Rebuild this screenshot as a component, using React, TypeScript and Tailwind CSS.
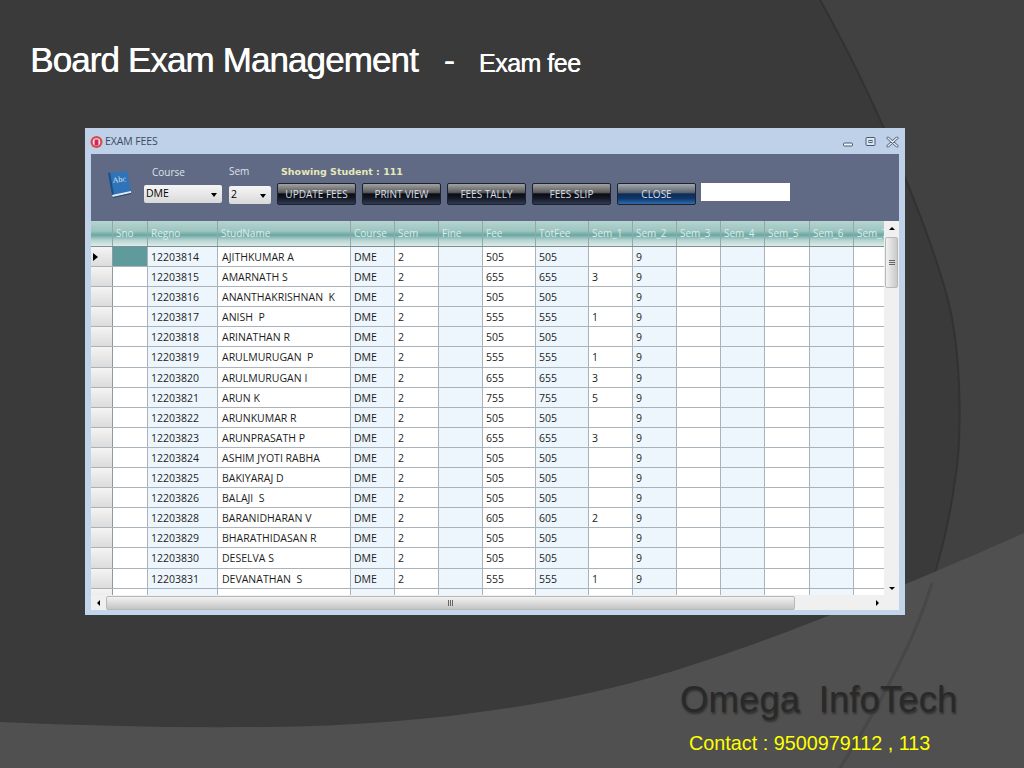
import type { ReactNode } from "react";

type Student = {
  regno: string;
  name: string;
  fee: string;
  sem1?: string;
};

const students: Student[] = [
  { regno: "12203814", name: "AJITHKUMAR A", fee: "505" },
  { regno: "12203815", name: "AMARNATH S", fee: "655", sem1: "3" },
  { regno: "12203816", name: "ANANTHAKRISHNAN  K", fee: "505" },
  { regno: "12203817", name: "ANISH  P", fee: "555", sem1: "1" },
  { regno: "12203818", name: "ARINATHAN R", fee: "505" },
  { regno: "12203819", name: "ARULMURUGAN  P", fee: "555", sem1: "1" },
  { regno: "12203820", name: "ARULMURUGAN I", fee: "655", sem1: "3" },
  { regno: "12203821", name: "ARUN K", fee: "755", sem1: "5" },
  { regno: "12203822", name: "ARUNKUMAR R", fee: "505" },
  { regno: "12203823", name: "ARUNPRASATH P", fee: "655", sem1: "3" },
  { regno: "12203824", name: "ASHIM JYOTI RABHA", fee: "505" },
  { regno: "12203825", name: "BAKIYARAJ D", fee: "505" },
  { regno: "12203826", name: "BALAJI  S", fee: "505" },
  { regno: "12203828", name: "BARANIDHARAN V", fee: "605", sem1: "2" },
  { regno: "12203829", name: "BHARATHIDASAN R", fee: "505" },
  { regno: "12203830", name: "DESELVA S", fee: "505" },
  { regno: "12203831", name: "DEVANATHAN  S", fee: "555", sem1: "1" },
];

const columns = ["Sno", "Regno", "StudName", "Course", "Sem", "Fine", "Fee", "TotFee", "Sem_1", "Sem_2", "Sem_3", "Sem_4", "Sem_5", "Sem_6", "Sem_7"];

const gridCols = "grid grid-cols-[22px_35px_70px_133px_44px_44px_44px_53px_53px_44px_44px_44px_44px_45px_44px_31px]";

function Cell({ children, tint }: { children?: ReactNode; tint?: boolean }) {
  return (
    <div className={`overflow-hidden whitespace-pre border-r border-[#aab2ba] pl-[3px] leading-[20px] ${tint ? "bg-[#eef6fd]" : "bg-white"}`}>
      {children}
    </div>
  );
}

function RowHead({ current }: { current?: boolean }) {
  return (
    <div className="flex items-center border-r border-[#8f9a9f] bg-gradient-to-b from-[#f4f4f4] to-[#dcdcdc] pl-[2px]">
      {current && <div className="h-0 w-0 border-y-[4px] border-l-[5px] border-y-transparent border-l-black" />}
    </div>
  );
}

function GridRow({ student, index }: { student?: Student; index: number }) {
  return (
    <div className={`${gridCols} h-[20.1px] shrink-0 border-b border-[#aab2ba]`}>
      <RowHead current={index === 0} />
      <div className={`border-r border-[#aab2ba] ${index === 0 ? "bg-[#5f9a9c]" : "bg-white"}`} />
      <Cell tint>{student?.regno}</Cell>
      <Cell>{student && <span className="ml-px">{student.name}</span>}</Cell>
      <Cell tint>{student && "DME"}</Cell>
      <Cell>{student && "2"}</Cell>
      <Cell tint />
      <Cell>{student?.fee}</Cell>
      <Cell tint>{student?.fee}</Cell>
      <Cell>{student?.sem1}</Cell>
      <Cell tint>{student && "9"}</Cell>
      <Cell />
      <Cell tint />
      <Cell />
      <Cell tint />
      <Cell />
    </div>
  );
}

function DarkButton({ label, blue }: { label: string; blue?: boolean }) {
  return (
    <div
      className={`flex h-[22px] w-[79px] items-center justify-center rounded-[2px] border border-[#1c2230] text-[10px] text-[#d8dde4] ${
        blue
          ? "bg-[linear-gradient(#a4a8ae_0%,#5c6670_42%,#0c2c58_50%,#0f3768_72%,#2f6cae_100%)]"
          : "bg-[linear-gradient(#a2a2a2_0%,#5a5a5a_42%,#0a0c12_50%,#141a28_72%,#323c50_100%)]"
      }`}
    >
      {label}
    </div>
  );
}

function Combo({ value, width }: { value: string; width: string }) {
  return (
    <div className={`flex h-[18px] items-center justify-between rounded-[2px] bg-gradient-to-b from-[#f6f6f6] to-[#d9d9d9] pl-[2px] pr-[5px] text-[10.5px] text-black ${width}`}>
      <span>{value}</span>
      <div className="mt-[1px] h-0 w-0 border-x-[3.5px] border-t-[4px] border-x-transparent border-t-black" />
    </div>
  );
}

function BookIcon() {
  return (
    <svg width="25" height="28" viewBox="0 0 25 28">
      <path d="M1 3 L20 1 L24 21 L5 25 Z" fill="#2f74b8" />
      <path d="M1 3 L3 2.6 L7 24.6 L5 25 Z" fill="#1b4f8a" />
      <path d="M5 25 L24 21 L24 23 L6 27 Z" fill="#dfe8f0" />
      <path d="M6 27 L24 23 L24 24 L6 28 Z" fill="#1d4a7c" />
      <text x="6" y="13" fontSize="8" fill="#d7e8f6" fontFamily="'Liberation Serif', serif" transform="rotate(-7 6 13)">
        Abc
      </text>
    </svg>
  );
}

function AppIcon() {
  return (
    <svg width="13" height="14" viewBox="0 0 13 14">
      <circle cx="6.5" cy="7" r="6" fill="#d9484c" />
      <circle cx="6.5" cy="7" r="3.8" fill="#f6dcdc" />
      <rect x="4.6" y="4.6" width="3.8" height="6" rx="1" fill="#c8286a" />
    </svg>
  );
}

function WindowControls() {
  return (
    <div className="flex items-center gap-[9px]">
      <svg width="13" height="12" viewBox="0 0 13 12">
        <rect x="1.5" y="7" width="9" height="3" rx="1" fill="#f2f6fb" stroke="#4b5a70" />
      </svg>
      <svg width="13" height="12" viewBox="0 0 13 12">
        <rect x="2" y="1.5" width="9" height="8" rx="1" fill="#dbe6f3" stroke="#4b5a70" />
        <rect x="5" y="4.5" width="3" height="2" fill="none" stroke="#4b5a70" />
      </svg>
      <svg width="13" height="12" viewBox="0 0 13 12">
        <path d="M2 2 L11 10 M11 2 L2 10" stroke="#4b5a70" strokeWidth="3" strokeLinecap="round" />
        <path d="M2 2 L11 10 M11 2 L2 10" stroke="#e8eff7" strokeWidth="1.4" strokeLinecap="round" />
      </svg>
    </div>
  );
}

function ExamFeesWindow() {
  return (
    <div className="ml-[85px] flex h-[487px] w-[820px] flex-col bg-gradient-to-b from-[#bed1e8] to-[#c3d5ea] px-[6px] pb-[5px] font-['Open_Sans',sans-serif]">
      <div className="flex h-[26px] shrink-0 items-center justify-between pt-[1px] text-[10.5px] tracking-[-0.1px] text-[#3b4a60]">
        <div className="-ml-px flex items-center gap-[2px]">
          <AppIcon />
          <span>EXAM FEES</span>
        </div>
        <WindowControls />
      </div>

      <div className="flex h-[67px] shrink-0 items-start bg-[#606a85] text-[10px] text-[#dfe3ea]">
        <div className="ml-[16px] mt-[16px]">
          <BookIcon />
        </div>
        <div className="ml-[12px] mt-[11px] flex w-[78px] flex-col">
          <span className="mb-[6px] ml-[8px] leading-[14px]">Course</span>
          <Combo value="DME" width="w-[78px]" />
        </div>
        <div className="ml-[7px] mt-[10px] flex w-[42px] flex-col">
          <span className="mb-[8px] leading-[14px]">Sem</span>
          <Combo value="2" width="w-[42px]" />
        </div>
        <div className="ml-[6px] mt-[11px] flex flex-col">
          <span className="mb-[4px] ml-[4px] font-['DejaVu_Sans',sans-serif] text-[9.5px] font-bold leading-[14px] text-[#e6e8b8]">Showing Student : 111</span>
          <div className="flex gap-[6px]">
            <DarkButton label="UPDATE FEES" />
            <DarkButton label="PRINT VIEW" />
            <DarkButton label="FEES TALLY" />
            <DarkButton label="FEES SLIP" />
            <DarkButton label="CLOSE" blue />
            <div className="-ml-[1px] h-[18px] w-[89px] bg-white" />
          </div>
        </div>
      </div>

      <div className="flex min-h-0 flex-1">
        <div className="flex min-w-0 flex-1 flex-col overflow-hidden bg-white text-[10.5px] text-[#1c1c1c]">
          <div className={`${gridCols} h-[26px] shrink-0 border-b border-[#7e8f90] text-[10px] text-[#dcecea]`}>
            <div className="border-r border-[#93a8a8] bg-[linear-gradient(#b6d4d0_0%,#9cc5c1_40%,#6aa6a1_56%,#b4d3cf_76%,#deecea_100%)]" />
            {columns.map((col) => (
              <div
                key={col}
                className="overflow-hidden whitespace-nowrap border-r border-[#93a8a8] bg-[linear-gradient(#b6d4d0_0%,#9cc5c1_40%,#6aa6a1_56%,#b4d3cf_76%,#deecea_100%)] pl-[3px] leading-[25px]"
              >
                {col}
              </div>
            ))}
          </div>
          {students.map((student, index) => (
            <GridRow key={student.regno} student={student} index={index} />
          ))}
          <GridRow index={17} />
        </div>

        <div className="flex w-[15px] shrink-0 flex-col items-center bg-[#f0f0f0]">
          <div className="mt-[6px] h-0 w-0 border-x-[3px] border-b-[3px] border-x-transparent border-b-black" />
          <div className="mt-[7px] flex h-[51px] w-[13px] items-center justify-center rounded-[2px] border border-[#b8b8b8] bg-gradient-to-r from-[#f2f2f2] to-[#c9c9c9] text-[6px] text-[#555]">
            <div className="flex flex-col gap-[1px]">
              <div className="h-px w-[6px] bg-[#666]" />
              <div className="h-px w-[6px] bg-[#666]" />
              <div className="h-px w-[6px] bg-[#666]" />
            </div>
          </div>
          <div className="mt-auto mb-[5px] h-0 w-0 border-x-[3px] border-t-[3px] border-x-transparent border-t-black" />
        </div>
      </div>

      <div className="flex h-[15px] shrink-0 items-center bg-[#f0f0f0]">
        <div className="flex w-[15px] justify-center">
          <div className="h-0 w-0 border-y-[3px] border-r-[3px] border-y-transparent border-r-black" />
        </div>
        <div className="flex h-[14px] w-[689px] items-center justify-center rounded-[2px] border border-[#b8b8b8] bg-gradient-to-b from-[#f2f2f2] to-[#c4c4c4]">
          <div className="flex gap-[1px]">
            <div className="h-[6px] w-px bg-[#666]" />
            <div className="h-[6px] w-px bg-[#666]" />
            <div className="h-[6px] w-px bg-[#666]" />
          </div>
        </div>
        <div className="ml-auto mr-[20px] h-0 w-0 border-y-[3px] border-l-[3px] border-y-transparent border-l-black" />
      </div>
    </div>
  );
}

export default function App() {
  return (
    <div className="relative h-[768px] w-[1024px] overflow-hidden bg-[#3a3a3a] font-['Liberation_Sans',sans-serif]">
      <svg className="absolute inset-0" width="1024" height="768" viewBox="0 0 1024 768">
        <path d="M820 0 C868 85 925 215 948 300 C962 355 962 440 955 480 C945 560 905 660 840 768 L1024 768 L1024 0 Z" fill="#414141" />
        <path d="M820 0 C868 85 925 215 948 300 C962 355 962 440 955 480 C948 530 940 555 932 583" fill="none" stroke="#323232" strokeWidth="2" />
        <path d="M0 722 C90 726 180 728 268 727 C400 726 540 710 660 675 C760 645 860 605 1024 533 L1024 768 L0 768 Z" fill="#505050" />
        <path d="M932 583 C915 640 880 705 840 768" fill="none" stroke="#474747" strokeWidth="3" />
      </svg>

      <div className="relative flex h-full flex-col">
        <div className="flex h-[128px] shrink-0 items-baseline pl-[30px] pt-[41px] text-white [text-shadow:0.5px_0_0_#fff]">
          <span className="text-[35px] leading-[38px] tracking-[-0.9px]">Board Exam Management</span>
          <span className="ml-[26px] text-[33px] leading-[38px]">-</span>
          <span className="ml-[24px] text-[25px] leading-[38px] tracking-[-0.5px]">Exam fee</span>
        </div>

        <ExamFeesWindow />

        <div className="ml-[680px] mt-[63px] whitespace-pre text-[36.5px] leading-[44px] tracking-[0.1px] text-[#292929] [text-shadow:1px_2px_2px_#2f2f2f]">
          Omega <span className="-ml-[2px]"> InfoTech</span>
        </div>
        <div className="ml-[689px] mt-[10px] whitespace-pre text-[19.8px] leading-[22px] text-[#ffff00]">
          Contact : 9500979112 , 113
        </div>
      </div>
    </div>
  );
}
